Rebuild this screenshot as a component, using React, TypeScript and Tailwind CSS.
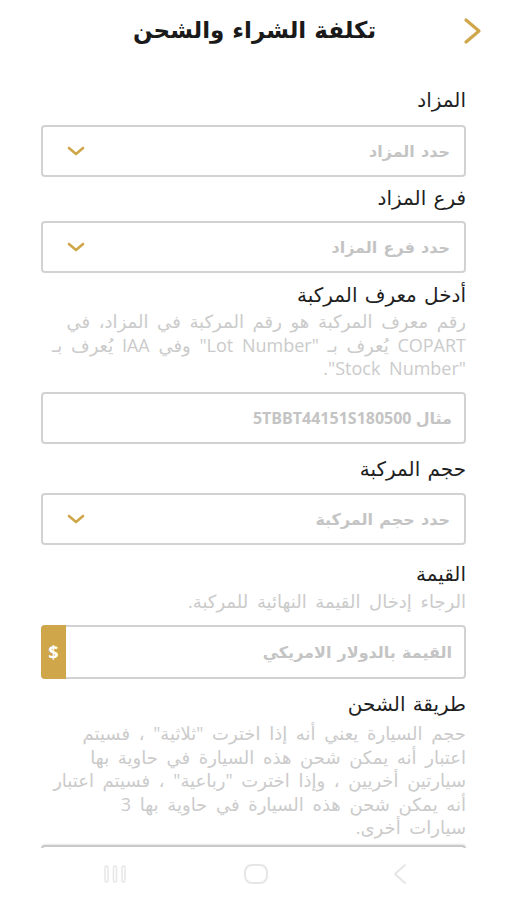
import React from "react";

const GOLD = "#cfa64a";

function ChevronDown() {
  return (
    <svg width="18" height="10" viewBox="0 0 18 10" fill="none">
      <polyline points="2,2 9,8 16,2" stroke={GOLD} strokeWidth="2.6" strokeLinecap="round" strokeLinejoin="round" />
    </svg>
  );
}

function Label({ children, className = "" }: { children: React.ReactNode; className?: string }) {
  return <div className={"text-[20px] leading-[24px] text-[#1f1f1f] [word-spacing:2px] " + className}>{children}</div>;
}

function SelectBox({ placeholder, className = "" }: { placeholder: string; className?: string }) {
  return (
    <div className={"h-[52px] border-2 border-[#d2d2d2] rounded-[4px] flex items-center justify-between pr-[14px] pl-[24px] " + className}>
      <span className="text-[16px] font-bold text-[#c4c4c4] [word-spacing:2px]">{placeholder}</span>
      <ChevronDown />
    </div>
  );
}

function Desc({ lines, className = "" }: { lines: string[]; className?: string }) {
  return (
    <div className={"text-[18px] leading-[23.5px] text-[#cbcbcb] [word-spacing:4px] " + className}>
      {lines.map((l, i) => (
        <div key={i} className="whitespace-nowrap">{l}</div>
      ))}
    </div>
  );
}

export default function App() {
  return (
    <div
      dir="rtl"
      className="relative w-[507px] h-[900px] overflow-hidden bg-white"
      style={{ fontFamily: '"Open Sans", "DejaVu Sans", sans-serif' }}
    >
      {/* Header */}
      <div className="relative h-[60px] flex items-center justify-center">
        <div className="text-[23px] font-bold text-[#1a1a1a] leading-[30px] -mt-[3px] ml-[2px] [word-spacing:2px]">تكلفة الشراء والشحن</div>
        <div className="absolute right-[22px] top-[17px]">
          <svg width="24" height="28" viewBox="0 0 24 28" fill="none">
            <polyline points="5,3 18,14 5,25" stroke={GOLD} strokeWidth="3.2" strokeLinecap="round" strokeLinejoin="round" />
          </svg>
        </div>
      </div>

      <div className="px-[41px] flex flex-col">
        <Label className="mt-[28px]">المزاد</Label>
        <SelectBox placeholder="حدد المزاد" className="mt-[13px]" />

        <Label className="mt-[9px]">فرع المزاد</Label>
        <SelectBox placeholder="حدد فرع المزاد" className="mt-[11px]" />

        <Label className="mt-[10px]">أدخل معرف المركبة</Label>
        <Desc
          className="mt-[3px]"
          lines={[
            "رقم معرف المركبة هو رقم المركبة في المزاد، في",
            "COPART يُعرف بـ \"Lot Number\" وفي IAA يُعرف بـ",
            "\"Stock Number\".",
          ]}
        />
        <div className="mt-[11px] h-[52px] border-2 border-[#d2d2d2] rounded-[4px] flex items-center pr-[12px]">
          <span className="text-[16px] font-bold text-[#c4c4c4]">مثال 5TBBT44151S180500</span>
        </div>

        <Label className="mt-[13px]">حجم المركبة</Label>
        <SelectBox placeholder="حدد  حجم المركبة" className="mt-[12px]" />

        <Label className="mt-[17px]">القيمة</Label>
        <Desc className="mt-[4px]" lines={["الرجاء إدخال القيمة النهائية للمركبة."]} />
        <div className="mt-[12px] h-[54px] border-2 border-[#d2d2d2] rounded-[4px] flex items-stretch">
          <div className="flex-1 flex items-center pr-[12px]">
            <span className="text-[16px] font-bold text-[#c4c4c4] [word-spacing:2px]">القيمة بالدولار الامريكي</span>
          </div>
          <div className="w-[25px] -my-[2px] -ml-[2px] rounded-l-[4px] flex items-center justify-center text-white font-bold text-[18px]" style={{ backgroundColor: GOLD }}>
            $
          </div>
        </div>

        <Label className="mt-[13px]">طريقة الشحن</Label>
        <Desc
          className="mt-[6px]"
          lines={[
            "حجم السيارة يعني أنه إذا اخترت \"ثلاثية\" ، فسيتم",
            "اعتبار أنه يمكن شحن هذه السيارة في حاوية بها",
            "سيارتين أخريين ، وإذا اخترت \"رباعية\" ، فسيتم اعتبار",
            "أنه يمكن شحن هذه السيارة في حاوية بها 3",
            "سيارات أخرى.",
          ]}
        />
        <div className="mt-[5px] h-[52px] border-2 border-[#c8c8c8] rounded-[4px] shadow-[0_-1px_2px_rgba(0,0,0,0.1)]"></div>
      </div>

      {/* System nav bar overlay */}
      <div dir="ltr" className="absolute left-0 right-0 bottom-0 h-[52px] bg-white flex items-center pl-[103px]">
        <svg width="24" height="20" viewBox="0 0 24 20" fill="none">
          <rect x="2" y="2" width="3" height="16" rx="1.5" stroke="#e6e6e6" strokeWidth="1.5" />
          <rect x="10.5" y="2" width="3" height="16" rx="1.5" stroke="#e6e6e6" strokeWidth="1.5" />
          <rect x="19" y="2" width="3" height="16" rx="1.5" stroke="#e6e6e6" strokeWidth="1.5" />
        </svg>
        <svg width="26" height="22" viewBox="0 0 26 22" fill="none" className="ml-[116px]">
          <rect x="2" y="2" width="22" height="18" rx="7" stroke="#e6e6e6" strokeWidth="2" />
        </svg>
        <svg width="18" height="22" viewBox="0 0 18 22" fill="none" className="ml-[122px]">
          <polyline points="14,2 4,11 14,20" stroke="#e6e6e6" strokeWidth="2" strokeLinecap="round" strokeLinejoin="round" />
        </svg>
      </div>
    </div>
  );
}
